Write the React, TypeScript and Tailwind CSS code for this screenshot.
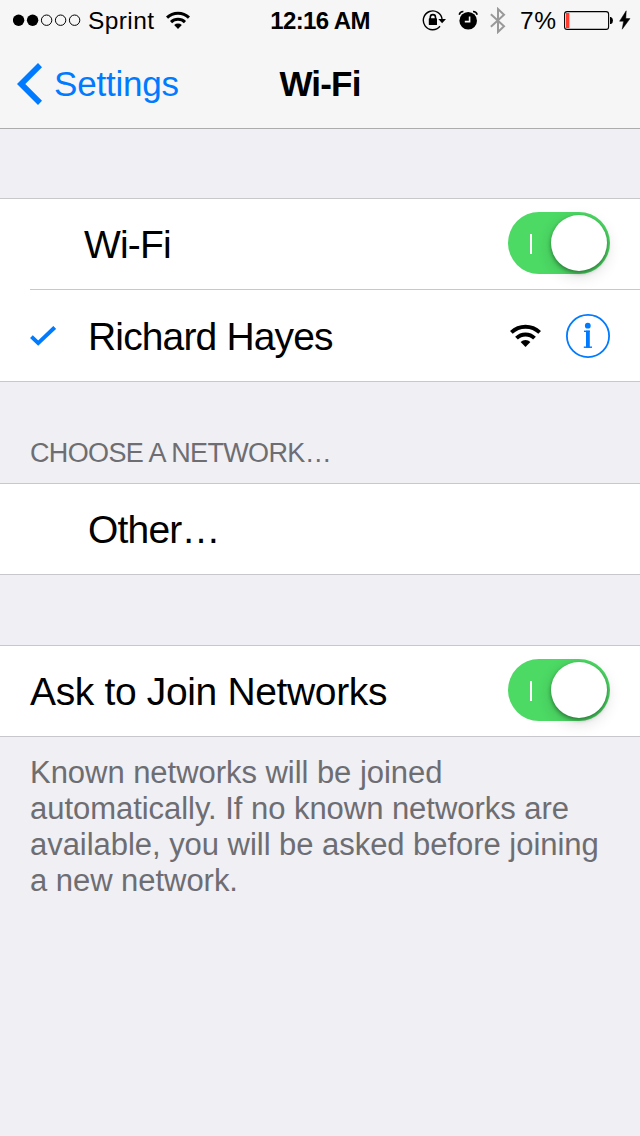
import React, { useState } from "react";

interface IconProps {
  className?: string;
}

const WifiIcon: React.FC<IconProps> = ({ className }) => (
  <svg viewBox="0 0 31 23" className={className} fill="none" stroke="#000">
    <path d="M1.3 8.4 A20.5 20.5 0 0 1 29.7 8.4" strokeWidth="4" />
    <path d="M6.5 14.2 A12.8 12.8 0 0 1 24.5 14.2" strokeWidth="3.9" />
    <path
      d="M15.5 23 L10.6 18 A7.2 7.2 0 0 1 20.4 18 Z"
      fill="#000"
      stroke="none"
    />
  </svg>
);

const SignalDots = () => (
  <svg width="68" height="12" viewBox="0 0 68 12" className="shrink-0">
    {[0, 1, 2, 3, 4].map((i) => (
      <circle
        key={i}
        cx={5.6 + i * 14}
        cy="6.2"
        r={i < 2 ? 5.7 : 5.2}
        fill={i < 2 ? "#000" : "none"}
        stroke={i < 2 ? "none" : "#000"}
      />
    ))}
  </svg>
);

const RotationLockIcon = () => (
  <svg width="24" height="22" viewBox="0 0 24 22" className="shrink-0">
    <path
      d="M18 17.3 A9.4 9.4 0 1 1 20.1 10.5"
      fill="none"
      stroke="#000"
      strokeWidth="1.4"
    />
    <path d="M16.3 10 H24 L20.1 14.2 Z" fill="#000" />
    <rect x="6.8" y="9.3" width="8.2" height="6.7" rx="0.6" fill="#000" />
    <path
      d="M8.3 10 V8.2 A2.6 2.6 0 0 1 13.5 8.2 V10"
      fill="none"
      stroke="#000"
      strokeWidth="1.6"
    />
  </svg>
);

const AlarmIcon = () => (
  <svg width="20" height="20" viewBox="0 0 20 20" className="shrink-0">
    <circle cx="10.2" cy="10.8" r="8.8" fill="#000" />
    <path
      d="M1.2 4.8 A4.2 4.2 0 0 1 5.4 1.6 M19.2 4.8 A4.2 4.2 0 0 0 15 1.6"
      fill="none"
      stroke="#000"
      strokeWidth="1.5"
    />
    <path
      d="M11.6 6.6 V11.6 H6.8"
      fill="none"
      stroke="#f6f6f6"
      strokeWidth="1.6"
    />
  </svg>
);

const BluetoothIcon = () => (
  <svg width="16" height="27" viewBox="0 0 16 27" className="shrink-0">
    <path
      d="M0.9 7.3 L14 19.3 L8 25 V2 L14 7.7 L0.9 19.7"
      fill="none"
      stroke="#999"
      strokeWidth="2"
    />
  </svg>
);

const BatteryIcon = () => (
  <svg width="49" height="20" viewBox="0 0 49 20" className="shrink-0">
    <rect
      x="0.6"
      y="1.6"
      width="44"
      height="17.8"
      rx="2.5"
      fill="none"
      stroke="#000"
      strokeWidth="1.1"
    />
    <rect x="2" y="3" width="3.4" height="15" fill="#ff3b30" />
    <path d="M46 7 H47 Q49 8 49 10.5 Q49 13 47 14 H46 Z" fill="#000" />
  </svg>
);

const BoltIcon = () => (
  <svg width="12" height="20" viewBox="0 0 12 20" className="shrink-0">
    <path
      d="M7.2 0.8 L0.6 11.2 H4.6 L3.2 19.2 L11 8.6 H6.8 Z"
      fill="#000"
      stroke="#000"
      strokeWidth="0.5"
    />
  </svg>
);

const InfoIcon = () => (
  <svg width="44" height="44" viewBox="0 0 44 44" className="shrink-0">
    <circle
      cx="22"
      cy="22"
      r="21.1"
      fill="none"
      stroke="#007aff"
      strokeWidth="1.8"
    />
    <circle cx="21.8" cy="11.7" r="2.9" fill="#007aff" />
    <rect x="18" y="16.6" width="5.8" height="1.4" fill="#007aff" />
    <rect x="20" y="16.6" width="3.8" height="17" fill="#007aff" />
    <rect x="17.8" y="32.5" width="8.2" height="1.4" fill="#007aff" />
  </svg>
);

const StatusBar = () => (
  <div className="grid h-10 grid-cols-[250px_140px_250px] items-center text-[24.5px] leading-10">
    <div className="flex items-center pl-[13px]">
      <SignalDots />
      <span className="ml-[7px] w-[78px] pt-[2px] leading-[38px] tracking-[0.4px]">
        Sprint
      </span>
      <WifiIcon className="h-[18px] w-6" />
    </div>
    <div className="pt-[2px] text-center text-[24px] leading-[38px] font-bold tracking-[-0.6px]">
      12:16 AM
    </div>
    <div className="flex items-center pl-8">
      <RotationLockIcon />
      <div className="ml-3 flex">
        <AlarmIcon />
      </div>
      <div className="ml-3 flex">
        <BluetoothIcon />
      </div>
      <span className="ml-[14px] w-[44px] pt-[2px] leading-[38px] tracking-[0.5px]">
        7%
      </span>
      <BatteryIcon />
      <div className="ml-[6px] flex">
        <BoltIcon />
      </div>
    </div>
  </div>
);

const NavBar = () => (
  <div className="grid h-[88px] grid-cols-[220px_200px_220px] items-center text-[35px]">
    <button className="flex items-center pl-[17px] text-[#007aff]">
      <svg width="25" height="42" viewBox="0 0 25 42" fill="#007aff">
        <path d="M21 0 L25 4.3 L8.3 21 L25 37.7 L21 42 L0 21 Z" />
      </svg>
      <span className="ml-3 pt-px tracking-[-0.2px]">Settings</span>
    </button>
    <h1 className="pt-px text-center font-bold tracking-[-0.8px]">Wi-Fi</h1>
  </div>
);

interface ToggleProps {
  label: string;
}

const Toggle: React.FC<ToggleProps> = ({ label }) => {
  const [on, setOn] = useState(true);

  return (
    <button
      role="switch"
      aria-checked={on}
      aria-label={label}
      onClick={() => setOn(!on)}
      className={`mb-[2px] flex h-[62px] w-[102px] shrink-0 items-center rounded-full ${
        on ? "justify-between bg-[#4cd964] pr-[3px] pl-[22px]" : "bg-[#e5e5e5] pl-[3px]"
      }`}
    >
      {on && <span className="mt-[2px] h-5 w-[2px] bg-white"></span>}
      <span className="h-14 w-14 rounded-full bg-white shadow-[0_5px_16px_rgba(0,0,0,0.14),0_2px_4px_rgba(0,0,0,0.4)]"></span>
    </button>
  );
};

interface GroupProps {
  children?: React.ReactNode;
}

const Group: React.FC<GroupProps> = ({ children }) => (
  <div className="border-y border-[#c8c7cc] bg-white text-[39px]">
    {children}
  </div>
);

const App = () => {
  return (
    <div className="h-[1136px] w-[640px] overflow-hidden bg-[#efeff4] font-['Liberation_Sans',Arial,sans-serif] text-black">
      <header className="border-b border-[#acacac] bg-[#f6f6f6]">
        <StatusBar />
        <NavBar />
      </header>

      <main className="pt-[69px]">
        <Group>
          <div className="flex h-[90px] items-center justify-between pr-[30px] pl-[84px]">
            <span className="pt-[2px] tracking-[-0.8px]">Wi-Fi</span>
            <Toggle label="Wi-Fi" />
          </div>
          <div className="ml-[30px] flex h-[92px] items-center border-t border-[#c8c7cc] pr-[30px]">
            <svg width="26" height="20" viewBox="0 0 26 20" className="mr-8">
              <path
                d="M1.4 10.6 L8.2 17.1 L24.7 1.4"
                fill="none"
                stroke="#007aff"
                strokeWidth="4"
              />
            </svg>
            <span className="grow pt-1 tracking-[-0.85px]">Richard Hayes</span>
            <WifiIcon className="mr-[25px] h-[23px] w-[31px]" />
            <InfoIcon />
          </div>
        </Group>

        <h2 className="pt-[55px] pb-[14px] pl-[30px] text-[27px] leading-8 tracking-[-0.65px] text-[#6d6d72]">
          CHOOSE A NETWORK…
        </h2>
        <Group>
          <div className="flex h-[90px] items-center pl-[88px]">
            <span className="pt-[2px] tracking-[-0.8px]">Other…</span>
          </div>
        </Group>

        <div className="h-[70px]"></div>
        <Group>
          <div className="flex h-[90px] items-center justify-between px-[30px]">
            <span className="pt-[2px] tracking-[-0.35px]">
              Ask to Join Networks
            </span>
            <Toggle label="Ask to Join Networks" />
          </div>
        </Group>
        <p className="px-[30px] pt-[18px] text-[31px] leading-9 tracking-[-0.04px] text-[#6d6d72]">
          Known networks will be joined
          <br />
          automatically. If no known networks are
          <br />
          available, you will be asked before joining
          <br />a new network.
        </p>
      </main>
    </div>
  );
};

export default App;
